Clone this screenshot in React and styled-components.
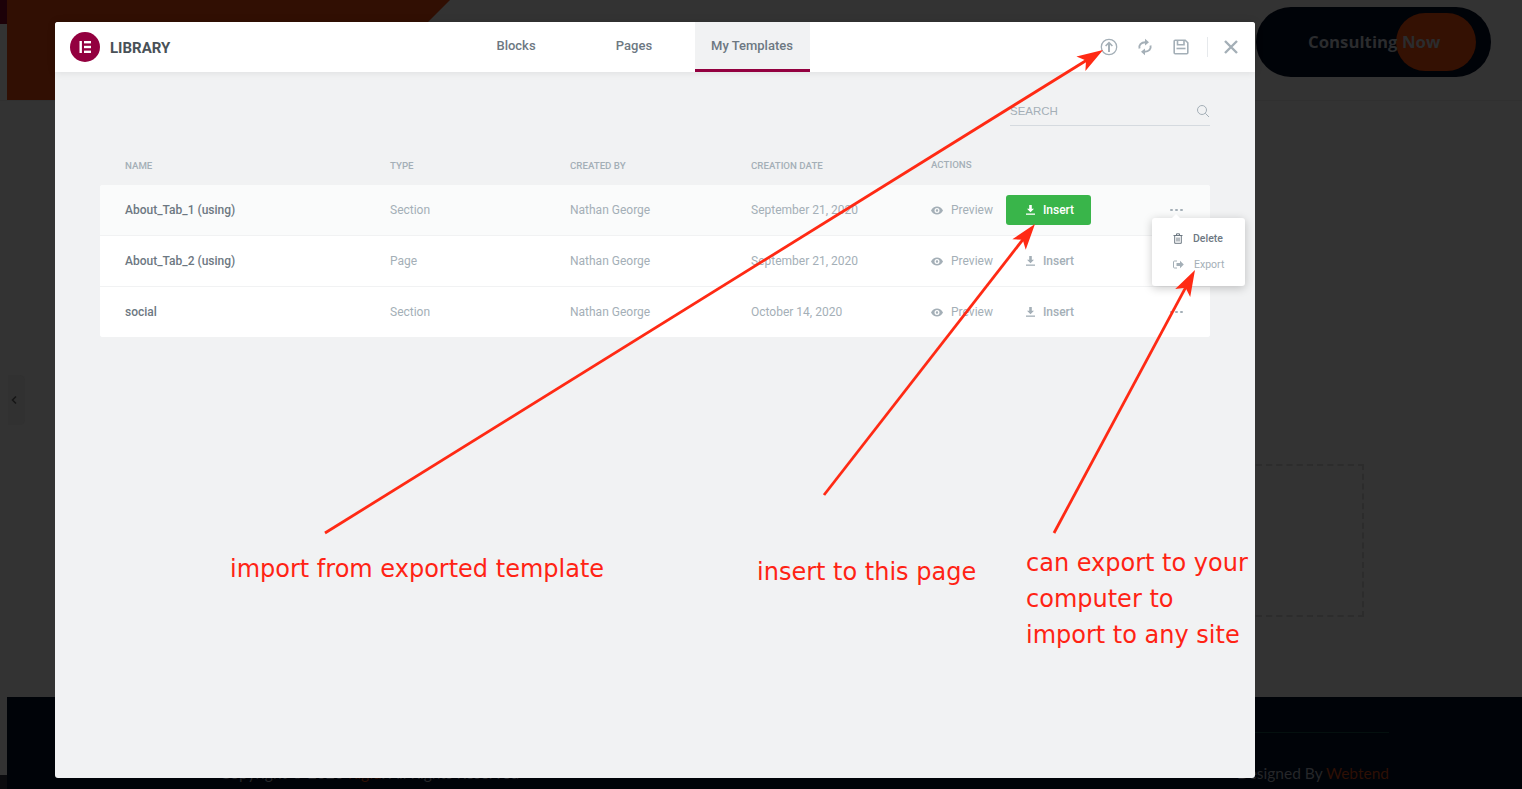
import React from "react";
import styled, { createGlobalStyle } from "styled-components";

const Global = createGlobalStyle`
  html, body { margin: 0; padding: 0; background: #333; }
  * { box-sizing: border-box; }
`;

const Page = styled.div`
  position: relative;
  width: 1522px;
  height: 789px;
  overflow: hidden;
  background: linear-gradient(#333 775px, #0b0b0e 775px);
  display: grid;
  grid-template-rows: 100px 1fr 92px;
  font-family: Roboto, "Liberation Sans", sans-serif;
`;
const SiteHeader = styled.header`
  display: flex;
  justify-content: space-between;
  align-items: flex-start;
  padding: 7px 31px 0 0;
  border-bottom: 1px solid #303030;
  height: 101px;
`;
const LeftEdge = styled.div`
  width: 7px;
  height: 24px;
  background: #1c0108;
  flex: none;
`;
const Hero = styled.div`
  flex: none;
  width: 443px;
  height: 100px;
  background: #310f03;
  clip-path: polygon(0 0, 100% 0, 343px 100%, 0 100%);
`;
const HeaderLead = styled.div`
  display: flex;
  margin-top: -7px;
`;
const Consult = styled.div`
  width: 235px;
  height: 70px;
  border-radius: 35px;
  background: #000308;
  display: flex;
  align-items: center;
  padding: 0 0 2px 52px;
  position: relative;
  font: 700 16.8px "Open Sans", sans-serif;
  color: #2b2c2e;
`;
const ConsultLabel = styled.span`
  position: relative;
`;
const ConsultBlob = styled.span`
  position: absolute;
  left: 140px;
  top: 6px;
  width: 80px;
  height: 58px;
  border-radius: 29px;
  background: #341103;
`;
const Middle = styled.main`
  display: flex;
  justify-content: flex-end;
  align-items: flex-start;
  padding: 364px 158px 0 0;
`;
const Dashed = styled.div`
  width: 200px;
  height: 153px;
  border: 2px dashed #2c2c2c;
`;
const Toggle = styled.div`
  position: absolute;
  left: 8px;
  top: 375px;
  width: 17px;
  height: 50px;
  background: #313131;
  border-radius: 0 5px 5px 0;
  display: flex;
  align-items: center;
  padding-left: 3px;
  color: #161616;
`;
const Footer = styled.footer`
  margin-left: 7px;
  background: #000308;
  padding: 35px 133px 0 213px;
`;
const FooterLine = styled.div`
  height: 1px;
  background: #04100f;
`;
const FooterRow = styled.div`
  display: flex;
  justify-content: space-between;
  margin-top: 30px;
  font: 400 15.5px/20px Lato, sans-serif;
  color: #26272a;
`;
const FooterAccent = styled.span`
  color: #2e1005;
`;

const Modal = styled.div`
  position: absolute;
  left: 55px;
  top: 22px;
  width: 1200px;
  height: 756px;
  background: #f1f2f3;
  border-radius: 3px;
  display: flex;
  flex-direction: column;
`;
const ModalHeader = styled.div`
  height: 50px;
  flex: none;
  background: #fff;
  border-radius: 3px 3px 0 0;
  box-shadow: 0 0 8px rgba(0, 0, 0, 0.1);
  display: flex;
  align-items: stretch;
  position: relative;
`;
const Brand = styled.div`
  width: 403.5px;
  flex: none;
  display: flex;
  align-items: center;
  gap: 10px;
  padding-left: 15px;
`;
const BrandName = styled.span`
  font: 700 15px/18px Roboto, sans-serif;
  color: #495157;
  text-transform: uppercase;
  margin-top: 1px;
`;
const Tabs = styled.div`
  display: flex;
  gap: 3px;
`;
const Tab = styled.div`
  width: 115px;
  display: flex;
  align-items: center;
  justify-content: center;
  padding-bottom: 1px;
  font: 500 13px Roboto, sans-serif;
  color: #6d7882;
  background: ${(p) => (p.$active ? "#f1f2f3" : "transparent")};
  border-bottom: 3px solid ${(p) => (p.$active ? "#93003f" : "transparent")};
`;
const Tools = styled.div`
  margin-left: auto;
  display: flex;
  align-items: center;
  color: #a4afb7;
  padding-right: 17px;
`;
const Tool = styled.span`
  width: 36px;
  display: flex;
  justify-content: center;
  align-items: center;
  color: #a4afb7;
`;
const ToolDivider = styled.span`
  width: 1px;
  height: 20px;
  background: #e6e9ec;
  margin: 0 16px 0 8px;
`;
const Body = styled.div`
  padding: 0 45px;
  display: flex;
  flex-direction: column;
`;
const SearchBar = styled.div`
  align-self: flex-end;
  width: 200px;
  height: 31px;
  margin-top: 23px;
  padding-top: 2px;
  border-bottom: 1px solid #d5dadf;
  display: flex;
  justify-content: space-between;
  align-items: center;
  font: 400 11.5px "Liberation Sans", sans-serif;
  color: #a4afb7;
`;
const Columns = styled.div`
  display: grid;
  grid-template-columns: 265px 180px 181px 180px 1fr;
  padding-left: 25px;
  align-items: center;
`;
const TableHead = styled(Columns)`
  height: 59px;
  padding-top: 20px;
  font: 500 9.7px Roboto, sans-serif;
  color: #a4afb7;
  text-transform: uppercase;
`;
const HeadLast = styled.span`
  margin-top: -2px;
`;
const Table = styled.div`
  border-radius: 3px;
  overflow: hidden;
  background: #fff;
`;
const Row = styled(Columns)`
  height: 51px;
  background: ${(p) => (p.$hover ? "#fafbfb" : "#fff")};
  border-bottom: 1px solid #f1f2f3;
  font: 400 12px Roboto, sans-serif;
  color: #a4afb7;
  &:last-child { height: 50px; border-bottom: 0; }
`;
const Name = styled.span`
  font-weight: 500;
  color: #6d7882;
`;
const Actions = styled.div`
  display: flex;
  align-items: center;
`;
const Preview = styled.span`
  display: flex;
  align-items: center;
  gap: 8px;
  width: 75px;
`;
const Insert = styled.span`
  width: 85px;
  height: 30px;
  padding-left: 3px;
  display: flex;
  align-items: center;
  justify-content: center;
  gap: 8px;
  border-radius: 3px;
  font-weight: 500;
  background: ${(p) => (p.$primary ? "#39b54a" : "transparent")};
  color: ${(p) => (p.$primary ? "#fff" : "#a4afb7")};
`;
const Dots = styled.span`
  display: flex;
  gap: 2px;
  margin-left: 79px;
`;
const Dot = styled.i`
  width: 3px;
  height: 2px;
  background: #a4afb7;
  border-radius: 1px;
`;
const Menu = styled.div`
  position: absolute;
  left: 1097px;
  top: 196px;
  width: 93px;
  height: 68px;
  background: #fff;
  border-radius: 3px;
  box-shadow: 0 2px 10px rgba(0, 0, 0, 0.22);
  padding: 7px 0 0 21px;
  font: 400 10.5px Roboto, sans-serif;
  &::before {
    content: "";
    position: absolute;
    left: 20px;
    top: -4px;
    border-left: 4px solid transparent;
    border-right: 4px solid transparent;
    border-bottom: 4px solid #fff;
  }
`;
const MenuItem = styled.div`
  height: 26px;
  display: flex;
  align-items: center;
  gap: 10px;
  font-weight: ${(p) => (p.$muted ? 400 : 500)};
  color: ${(p) => (p.$muted ? "#a4afb7" : "#6d7882")};
`;
const Overlay = styled.svg`
  position: absolute;
  inset: 0;
  width: 1522px;
  height: 789px;
  pointer-events: none;
`;
const Note = styled.div`
  position: absolute;
  left: ${(p) => p.$x}px;
  top: ${(p) => p.$y}px;
  font: 400 24px/36px "DejaVu Sans", Verdana, sans-serif;
  color: #ff2314;
  white-space: pre-line;
`;

const Logo = () => (
  <svg width="30" height="30" viewBox="0 0 30 30">
    <circle cx="15" cy="15" r="15" fill="#93003f" />
    <rect x="9.5" y="9" width="2.4" height="12" fill="#fff" />
    <rect x="14" y="9" width="7" height="2.4" fill="#fff" />
    <rect x="14" y="13.8" width="7" height="2.4" fill="#fff" />
    <rect x="14" y="18.6" width="7" height="2.4" fill="#fff" />
  </svg>
);
const UploadIcon = () => (
  <svg width="18" height="18" viewBox="0 0 18 18" fill="none" stroke="currentColor">
    <circle cx="9" cy="9" r="7.7" strokeWidth="1.3" />
    <path d="M9 14V5.5" strokeWidth="2" />
    <path d="M5.6 8 9 4.6 12.4 8" strokeWidth="1.6" />
  </svg>
);
const SyncIcon = () => (
  <svg width="16" height="18" viewBox="0 0 16 18" fill="none" stroke="currentColor" strokeWidth="1.9">
    <path d="M2.5 10.5C1.6 7 4 4.2 8.5 4.2" />
    <path d="M13.5 7.5c.9 3.5-1.5 6.3-6 6.3" />
    <path d="M8 .8l4 3.4-4 3.3z" fill="currentColor" stroke="none" />
    <path d="M8 10.5l-4 3.3 4 3.4z" fill="currentColor" stroke="none" />
  </svg>
);
const SaveIcon = () => (
  <svg width="16" height="16" viewBox="0 0 16 16" fill="none" stroke="currentColor" strokeWidth="1.6">
    <path d="M1.2 2.2a1 1 0 0 1 1-1h10l2.6 2.6v10a1 1 0 0 1-1 1H2.2a1 1 0 0 1-1-1z" />
    <path d="M4.5 1.5v4.2h6.5V1.5" />
    <path d="M3.5 9.5h9" />
  </svg>
);
const CloseIcon = () => (
  <svg width="14" height="14" viewBox="0 0 14 14" stroke="currentColor" strokeWidth="2.4">
    <path d="M1 1l12 12M13 1L1 13" />
  </svg>
);
const SearchIcon = () => (
  <svg width="14" height="14" viewBox="0 0 14 14" fill="none" stroke="#a4afb7" strokeWidth="1">
    <circle cx="6" cy="6" r="4.5" />
    <path d="M9.3 9.3l3.7 3.7" />
  </svg>
);
const EyeIcon = () => (
  <svg width="12" height="9" viewBox="0 0 12 9">
    <path fillRule="evenodd" fill="#a4afb7" d="M6 .5C3.5.5 1.3 2 0 4.5 1.3 7 3.5 8.5 6 8.5S10.7 7 12 4.5C10.7 2 8.5.5 6 .5zm0 1.5a2.5 2.5 0 1 1 0 5 2.5 2.5 0 0 1 0-5zm0 1.3a1.2 1.2 0 1 0 0 2.4 1.2 1.2 0 0 0 0-2.4z" />
  </svg>
);
const DownloadIcon = () => (
  <svg width="9" height="10" viewBox="0 0 9 10" fill="currentColor">
    <path d="M3.2 0h2.6v3.8h2.2L4.5 7.3 1 3.8h2.200z" />
    <rect y="8.5" width="9" height="1.3" />
  </svg>
);
const TrashIcon = () => (
  <svg width="10" height="11" viewBox="0 0 10 11" fill="none" stroke="#6d7882" strokeWidth="1">
    <path d="M.5 2.5h9M3.5 2.5V.8h3v1.7M1.700 2.5v7.8h6.6V2.5M4 4.5v4M6 4.5v4" />
  </svg>
);
const ExportIcon = () => (
  <svg width="11" height="9" viewBox="0 0 11 9">
    <path d="M4 1H1.500a1 1 0 0 0-1 1v5a1 1 0 0 0 1 1H4" fill="none" stroke="#a4afb7" />
    <path d="M3.500 3h3.500V.8L10.800 4.500 7 8.200V6H3.500z" fill="#a4afb7" />
  </svg>
);
const Chevron = () => (
  <svg width="6" height="8" viewBox="0 0 6 8" fill="none" stroke="currentColor" strokeWidth="1.5">
    <path d="M5 .5L1.500 4 5 7.500" />
  </svg>
);

function Arrow({ x1, y1, x2, y2 }) {
  const len = Math.hypot(x2 - x1, y2 - y1);
  const ux = (x2 - x1) / len;
  const uy = (y2 - y1) / len;
  const at = (back, side) => `${x2 - ux * back - uy * side},${y2 - uy * back + ux * side}`;
  return (
    <g>
      <line x1={x1} y1={y1} x2={x2 - ux * 16} y2={y2 - uy * 16} stroke="#ff2a14" strokeWidth="2.8" />
      <polygon points={[at(0, 0), at(26, 8.5), at(20, 0), at(26, -8.5)].join(" ")} fill="#ff2a14" />
    </g>
  );
}

const rows = [
  { name: "About_Tab_1 (using)", type: "Section", date: "September 21, 2020", hover: true },
  { name: "About_Tab_2 (using)", type: "Page", date: "September 21, 2020" },
  { name: "social", type: "Section", date: "October 14, 2020" },
];

export default function App() {
  return (
    <Page>
      <Global />
      <SiteHeader>
        <HeaderLead>
          <LeftEdge />
          <Hero />
        </HeaderLead>
        <Consult>
          <ConsultBlob />
          <ConsultLabel>Consulting Now</ConsultLabel>
        </Consult>
      </SiteHeader>
      <Middle>
        <Dashed />
      </Middle>
      <Footer>
        <FooterLine />
        <FooterRow>
          <span>
            Copyright © 2020 <FooterAccent>Rigid</FooterAccent>. All Rights Reserved
          </span>
          <span>
            Designed By <FooterAccent>Webtend</FooterAccent>
          </span>
        </FooterRow>
      </Footer>
      <Toggle>
        <Chevron />
      </Toggle>
      <Modal>
        <ModalHeader>
          <Brand>
            <Logo />
            <BrandName>Library</BrandName>
          </Brand>
          <Tabs>
            <Tab>Blocks</Tab>
            <Tab>Pages</Tab>
            <Tab $active>My Templates</Tab>
          </Tabs>
          <Tools>
            <Tool><UploadIcon /></Tool>
            <Tool><SyncIcon /></Tool>
            <Tool><SaveIcon /></Tool>
            <ToolDivider />
            <CloseIcon />
          </Tools>
        </ModalHeader>
        <Body>
          <SearchBar>
            <span>SEARCH</span>
            <SearchIcon />
          </SearchBar>
          <TableHead>
            <span>Name</span>
            <span>Type</span>
            <span>Created By</span>
            <span>Creation Date</span>
            <HeadLast>Actions</HeadLast>
          </TableHead>
          <Table>
            {rows.map((r) => (
              <Row key={r.name} $hover={r.hover}>
                <Name>{r.name}</Name>
                <span>{r.type}</span>
                <span>Nathan George</span>
                <span>{r.date}</span>
                <Actions>
                  <Preview>
                    <EyeIcon />
                    Preview
                  </Preview>
                  <Insert $primary={r.hover}>
                    <DownloadIcon />
                    Insert
                  </Insert>
                  <Dots>
                    <Dot />
                    <Dot />
                    <Dot />
                  </Dots>
                </Actions>
              </Row>
            ))}
          </Table>
        </Body>
        <Menu>
          <MenuItem>
            <TrashIcon />
            Delete
          </MenuItem>
          <MenuItem $muted>
            <ExportIcon />
            Export
          </MenuItem>
        </Menu>
      </Modal>
      <Overlay viewBox="0 0 1522 789">
        <Arrow x1={325} y1={533} x2={1103} y2={50} />
        <Arrow x1={824} y1={495} x2={1035} y2={224} />
        <Arrow x1={1054} y1={533} x2={1195} y2={270} />
      </Overlay>
      <Note $x={230} $y={551}>import from exported template</Note>
      <Note $x={757} $y={554}>insert to this page</Note>
      <Note $x={1026} $y={545}>{"can export to your\ncomputer to\nimport to any site"}</Note>
    </Page>
  );
}
